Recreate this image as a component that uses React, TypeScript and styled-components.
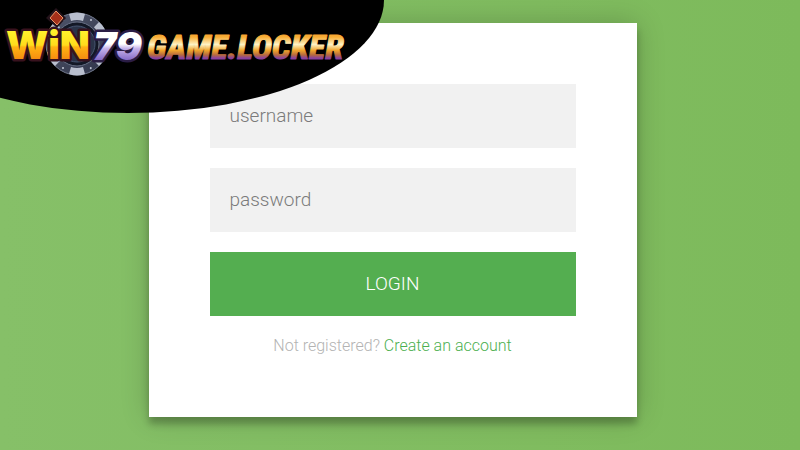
import React from "react";
import styled, { createGlobalStyle } from "styled-components";

const GlobalStyle = createGlobalStyle`
  *, *::before, *::after { box-sizing: border-box; }
  body {
    margin: 0;
    font-family: Roboto, "Liberation Sans", sans-serif;
    font-weight: 300;
  }
`;

const Page = styled.div`
  position: relative;
  overflow: hidden;
  display: flex;
  justify-content: center;
  align-items: flex-start;
  min-height: 100vh;
  padding: 23px 15px 33px 0;
  background: linear-gradient(to left, #7dba5b, #86c068);
`;

const Card = styled.main`
  width: 100%;
  max-width: 488px;
  padding: 61px;
  background: #fff;
  box-shadow: 0 0 27px rgba(0, 0, 0, 0.2), 0 7px 7px rgba(0, 0, 0, 0.24);
`;

const Form = styled.form`
  display: flex;
  flex-direction: column;
  gap: 20px;
`;

const Field = styled.input`
  width: 100%;
  height: 64px;
  padding: 0 20px 2px;
  border: 0;
  border-radius: 0;
  outline: 0;
  background: #f1f1f1;
  color: #333;
  font: inherit;
  font-size: 19px;
  &::placeholder {
    color: #7b7b7b;
    opacity: 1;
  }
`;

const SubmitButton = styled.button`
  width: 100%;
  height: 64px;
  padding: 0 0 2px;
  border: 0;
  background: #54ae50;
  color: #fff;
  font: inherit;
  font-size: 19px;
  text-transform: uppercase;
  cursor: pointer;
`;

const Message = styled.p`
  margin: 0;
  color: #b3b3b3;
  font-size: 16px;
  line-height: 20px;
  text-align: center;
`;

const MessageLink = styled.a`
  color: #4caf50;
  text-decoration: none;
`;

const Banner = styled.header`
  position: absolute;
  top: 0;
  left: 0;
  width: 384px;
  height: 113px;
  background: #000;
  clip-path: ellipse(256px 113px at 128px 0);
`;

const LogoArt = styled.svg`
  display: block;
  width: 352px;
  height: 84px;
`;

const spokes = [0, 60, 120, 180, 240, 300];

function Logo() {
  return (
    <LogoArt viewBox="0 0 352 84" role="img" aria-label="WIN79 GAME.LOCKER">
      <defs>
        <linearGradient id="gold" gradientUnits="userSpaceOnUse" x1="0" y1="29" x2="0" y2="60">
          <stop offset="0" stopColor="#fff52e" />
          <stop offset="0.52" stopColor="#ffdc1c" />
          <stop offset="0.58" stopColor="#ffb412" />
          <stop offset="1" stopColor="#f48a10" />
        </linearGradient>
        <linearGradient id="silver" gradientUnits="userSpaceOnUse" x1="0" y1="30" x2="0" y2="61">
          <stop offset="0.45" stopColor="#ffffff" />
          <stop offset="0.6" stopColor="#c5b2ea" />
          <stop offset="1" stopColor="#8165c5" />
        </linearGradient>
        <linearGradient id="sunset" gradientUnits="userSpaceOnUse" x1="0" y1="31" x2="0" y2="61">
          <stop offset="0" stopColor="#f39a2b" />
          <stop offset="0.2" stopColor="#f8ad35" />
          <stop offset="0.45" stopColor="#fff3c4" />
          <stop offset="0.65" stopColor="#efa42c" />
          <stop offset="0.8" stopColor="#b5693f" />
          <stop offset="0.9" stopColor="#8c449d" />
          <stop offset="1" stopColor="#7b3ba0" />
        </linearGradient>
        <linearGradient id="chip" x1="0" y1="0" x2="1" y2="1">
          <stop offset="0" stopColor="#50566b" />
          <stop offset="1" stopColor="#30354a" />
        </linearGradient>
      </defs>
      <circle cx="77" cy="44" r="31" fill="url(#chip)" stroke="#70778a" />
      {spokes.map((angle) => (
        <g key={angle} transform={`rotate(${angle} 77 44)`}>
          <path d="M69 14 Q77 11 85 14 L83 21 Q77 19 71 21 Z" fill="#b9bfce" />
          <circle cx="91" cy="20" r="1" fill="#c3c9d6" />
        </g>
      ))}
      <circle cx="77" cy="44" r="22" fill="#131826" stroke="#687086" />
      <circle cx="77" cy="44" r="18" fill="#2a3348" stroke="#465470" />
      <path d="M56 8 L66 18 L57 28 L46 18 Z" fill="#24131b" />
      <path d="M56 11 L63 18 L57 25 L50 18 Z" fill="#a5301a" stroke="#ea9468" />
      <g
        fontFamily="Inter, 'Liberation Sans', sans-serif"
        fontWeight="900"
        strokeLinejoin="round"
        strokeWidth="5"
        paintOrder="stroke"
      >
        <text x="6" y="59" fontSize="39" fill="url(#gold)" stroke="#38121e">WiN</text>
        <text x="93" y="60" fontSize="39" fontStyle="italic" fill="url(#silver)" stroke="#2b1d45">79</text>
      </g>
      <text
        x="147"
        y="59"
        fontFamily="'Roboto Condensed', 'Liberation Sans Narrow', sans-serif"
        fontSize="34"
        fontWeight="800"
        fontStyle="italic"
        fill="url(#sunset)"
        stroke="url(#sunset)"
        strokeWidth="1"
        strokeLinejoin="round"
      >
        GAME.LOCKER
      </text>
    </LogoArt>
  );
}

export default function App() {
  return (
    <>
      <GlobalStyle />
      <Page>
        <Card>
          <Form onSubmit={(event: React.FormEvent) => event.preventDefault()}>
            <Field type="text" name="username" placeholder="username" aria-label="username" />
            <Field type="password" name="password" placeholder="password" aria-label="password" />
            <SubmitButton type="submit">Login</SubmitButton>
            <Message>
              Not registered? <MessageLink href="#register">Create an account</MessageLink>
            </Message>
          </Form>
        </Card>
        <Banner>
          <Logo />
        </Banner>
      </Page>
    </>
  );
}
